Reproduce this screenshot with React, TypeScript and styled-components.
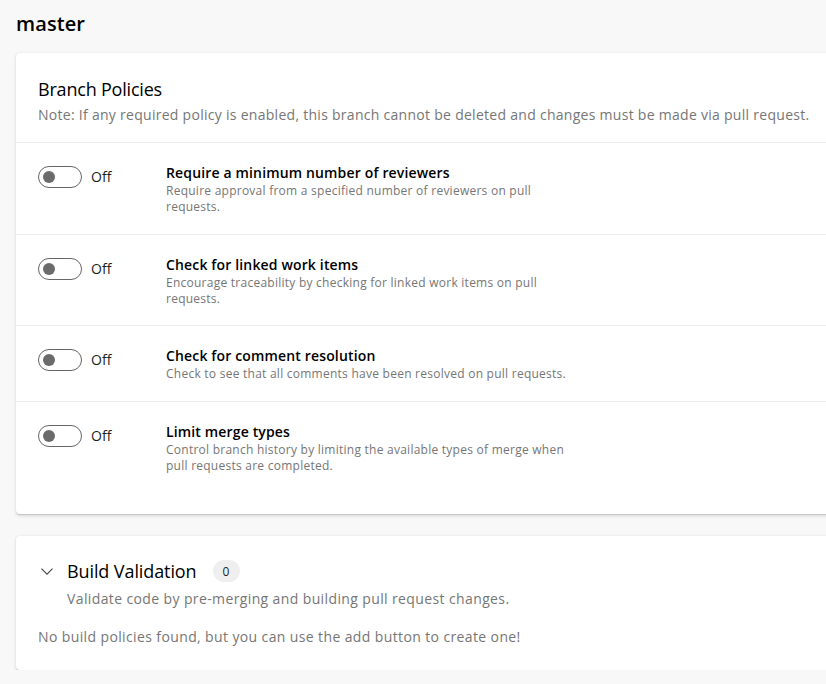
import React from "react";
import styled, { createGlobalStyle } from "styled-components";

const Global = createGlobalStyle`
  html, body { margin: 0; padding: 0; background: #f8f8f8; overflow: hidden; }
  body { font-family: "Open Sans", "Noto Sans", sans-serif; color: #201f1e; }
  * { box-sizing: border-box; }
`;

const Page = styled.div`
  width: 900px;
  padding: 10px 0 0 16px;
  display: flex;
  flex-direction: column;
`;

const Title = styled.h1`
  margin: 0 0 15px 0;
  font-size: 20px;
  line-height: 28px;
  font-weight: 600;
  letter-spacing: 0.1px;
  color: #000;
`;

const Card = styled.section<{ $gap?: number }>`
  background: #fff;
  border-radius: 4px;
  box-shadow: 0 1.6px 3.6px rgba(0,0,0,0.13), 0 0.3px 0.9px rgba(0,0,0,0.11);
  margin-bottom: ${p => p.$gap ?? 0}px;
  display: flex;
  flex-direction: column;
`;

const CardHeader = styled.div`
  padding: 24px 22px 17px 22px;
  border-bottom: 1px solid #eaeaea;
`;

const CardTitle = styled.h2`
  margin: 0;
  font-size: 18px;
  line-height: 24px;
  font-weight: 400;
  letter-spacing: -0.2px;
  color: #000;
`;

const Note = styled.div`
  margin-top: 4px;
  font-size: 14px;
  line-height: 20px;
  color: #767676;
  letter-spacing: 0.28px;
`;

const Row = styled.div<{ $pad: number; $last?: boolean }>`
  display: flex;
  align-items: flex-start;
  padding: 20px 22px ${p => p.$pad}px 22px;
  border-bottom: ${p => (p.$last ? "none" : "1px solid #eaeaea")};
`;

const ToggleWrap = styled.div`
  width: 128px;
  flex: none;
  display: flex;
  align-items: center;
  gap: 9px;
  padding-top: 3px;
`;

const Track = styled.div`
  width: 44px;
  height: 22px;
  border: 1px solid #666;
  border-radius: 11px;
  display: flex;
  align-items: center;
  padding: 0 4px;
`;

const Knob = styled.div`
  width: 12px;
  height: 12px;
  border-radius: 50%;
  background: #6b6b6b;
`;

const OffLabel = styled.span`
  font-size: 14px;
  line-height: 20px;
  color: #201f1e;
`;

const Info = styled.div`
  display: flex;
  flex-direction: column;
  max-width: 404px;
`;

const RowTitle = styled.div`
  font-size: 14px;
  line-height: 20px;
  font-weight: 600;
  color: #000;
  letter-spacing: 0.15px;
`;

const RowDesc = styled.div`
  font-size: 12px;
  line-height: 16px;
  color: #767676;
  letter-spacing: 0.25px;
`;

const Build = styled.div`
  padding: 22px 22px 23px 22px;
  display: flex;
  flex-direction: column;
`;

const BuildHead = styled.div`
  display: flex;
  align-items: center;
`;

const Chevron = styled.span`
  width: 29px;
  display: flex;
  align-items: center;
  padding-left: 3px;
`;

const BuildTitle = styled.h2`
  margin: 0;
  font-size: 18px;
  line-height: 26px;
  font-weight: 400;
  color: #000;
  letter-spacing: -0.1px;
`;

const Badge = styled.span`
  margin-left: 16px;
  min-width: 27px;
  height: 22px;
  border-radius: 11px;
  background: #efefef;
  font-size: 12px;
  color: #201f1e;
  display: inline-flex;
  align-items: center;
  justify-content: center;
`;

const BuildDesc = styled.div`
  margin-left: 29px;
  margin-top: 5px;
  font-size: 14px;
  line-height: 20px;
  color: #767676;
  letter-spacing: 0.38px;
`;

const Empty = styled.div`
  margin-top: 18px;
  font-size: 14px;
  line-height: 20px;
  color: #767676;
  letter-spacing: 0.38px;
`;

const policies = [
  { title: "Require a minimum number of reviewers", desc: "Require approval from a specified number of reviewers on pull requests.", pad: 19 },
  { title: "Check for linked work items", desc: "Encourage traceability by checking for linked work items on pull requests.", pad: 18 },
  { title: "Check for comment resolution", desc: "Check to see that all comments have been resolved on pull requests.", pad: 19 },
  { title: "Limit merge types", desc: "Control branch history by limiting the available types of merge when pull requests are completed.", pad: 40 },
];

export default function App() {
  return (
    <>
      <Global />
      <Page>
        <Title>master</Title>
        <Card $gap={22}>
          <CardHeader>
            <CardTitle>Branch Policies</CardTitle>
            <Note>Note: If any required policy is enabled, this branch cannot be deleted and changes must be made via pull request.</Note>
          </CardHeader>
          {policies.map((p, i) => (
            <Row key={p.title} $pad={p.pad} $last={i === policies.length - 1}>
              <ToggleWrap>
                <Track><Knob /></Track>
                <OffLabel>Off</OffLabel>
              </ToggleWrap>
              <Info>
                <RowTitle>{p.title}</RowTitle>
                <RowDesc>{p.desc}</RowDesc>
              </Info>
            </Row>
          ))}
        </Card>
        <Card>
          <Build>
            <BuildHead>
              <Chevron>
                <svg width="12" height="7" viewBox="0 0 12 7" fill="none">
                  <path d="M0.5 0.6 L6 6.1 L11.5 0.6" stroke="#444" strokeWidth="1.1" />
                </svg>
              </Chevron>
              <BuildTitle>Build Validation</BuildTitle>
              <Badge>0</Badge>
            </BuildHead>
            <BuildDesc>Validate code by pre-merging and building pull request changes.</BuildDesc>
            <Empty>No build policies found, but you can use the add button to create one!</Empty>
          </Build>
        </Card>
      </Page>
    </>
  );
}
